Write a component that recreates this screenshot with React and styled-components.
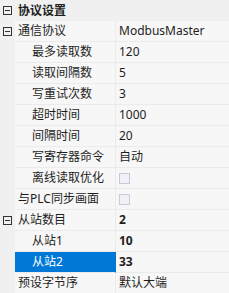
import React from 'react';
import styled, { createGlobalStyle } from 'styled-components';

const GlobalStyle = createGlobalStyle`
    html, body {
        margin: 0;
        padding: 0;
        background: #f7f7f7;
    }
    body {
        font-family: "Noto Sans", "Noto Sans CJK SC", sans-serif;
        font-size: 12px;
        color: #1e1e1e;
    }
`;

const Grid = styled.div`
    width: 229px;
    height: 293px;
    overflow: hidden;
    display: flex;
    flex-direction: column;
    background: #f7f7f7;
`;

const Row = styled.div`
    display: flex;
    height: 21px;
    flex-shrink: 0;
`;

const Gutter = styled.div`
    width: 15px;
    flex-shrink: 0;
    background: #f0f0f0;
    display: flex;
    align-items: center;
    justify-content: center;
`;

const CategoryLabel = styled.div`
    flex: 1;
    background: #f0f0f0;
    font-weight: bold;
    line-height: 21px;
    padding-left: 3px;
`;

const Name = styled.div`
    width: 100px;
    flex-shrink: 0;
    box-sizing: border-box;
    padding-left: ${props => props.indent ? 17 : 3}px;
    line-height: 20px;
    border-bottom: 1px solid #ebebeb;
    white-space: nowrap;
    overflow: hidden;
    background: ${props => props.selected ? '#0078d7' : 'transparent'};
    color: ${props => props.selected ? '#ffffff' : 'inherit'};
`;

const Value = styled.div`
    flex: 1;
    box-sizing: border-box;
    padding-left: 3px;
    line-height: 20px;
    border-bottom: 1px solid #ebebeb;
    border-left: 1px solid ${props => props.selected ? '#0078d7' : '#ebebeb'};
    font-weight: ${props => props.bold ? 'bold' : 'normal'};
    white-space: nowrap;
    overflow: hidden;
    display: flex;
    align-items: center;
`;

const Check = styled.span`
    width: 11px;
    height: 11px;
    box-sizing: border-box;
    border: 1px solid #c9c9dc;
    background: #f0f0f5;
`;

const Expander = () => (
    <svg width="9" height="9" viewBox="0 0 9 9">
        <rect x="0.5" y="0.5" width="8" height="8" fill="none" stroke="#333" />
        <line x1="2" y1="4.5" x2="7" y2="4.5" stroke="#333" />
    </svg>
);

const rows = [
    { name: '通信协议', value: 'ModbusMaster', expander: true },
    { name: '最多读取数', value: '120', indent: true },
    { name: '读取间隔数', value: '5', indent: true },
    { name: '写重试次数', value: '3', indent: true },
    { name: '超时时间', value: '1000', indent: true },
    { name: '间隔时间', value: '20', indent: true },
    { name: '写寄存器命令', value: '自动', indent: true },
    { name: '离线读取优化', check: true, indent: true },
    { name: '与PLC同步画面', check: true },
    { name: '从站数目', value: '2', bold: true, expander: true },
    { name: '从站1', value: '10', bold: true, indent: true },
    { name: '从站2', value: '33', bold: true, indent: true, selected: true },
    { name: '预设字节序', value: '默认大端' },
];

const App = () => (
    <>
        <GlobalStyle />
        <Grid>
            <Row>
                <Gutter><Expander /></Gutter>
                <CategoryLabel>协议设置</CategoryLabel>
            </Row>
            {rows.map(r => (
                <Row key={r.name}>
                    <Gutter>{r.expander && <Expander />}</Gutter>
                    <Name indent={r.indent} selected={r.selected}>{r.name}</Name>
                    <Value bold={r.bold} selected={r.selected}>
                        {r.check ? <Check /> : r.value}
                    </Value>
                </Row>
            ))}
        </Grid>
    </>
);

export default App;
